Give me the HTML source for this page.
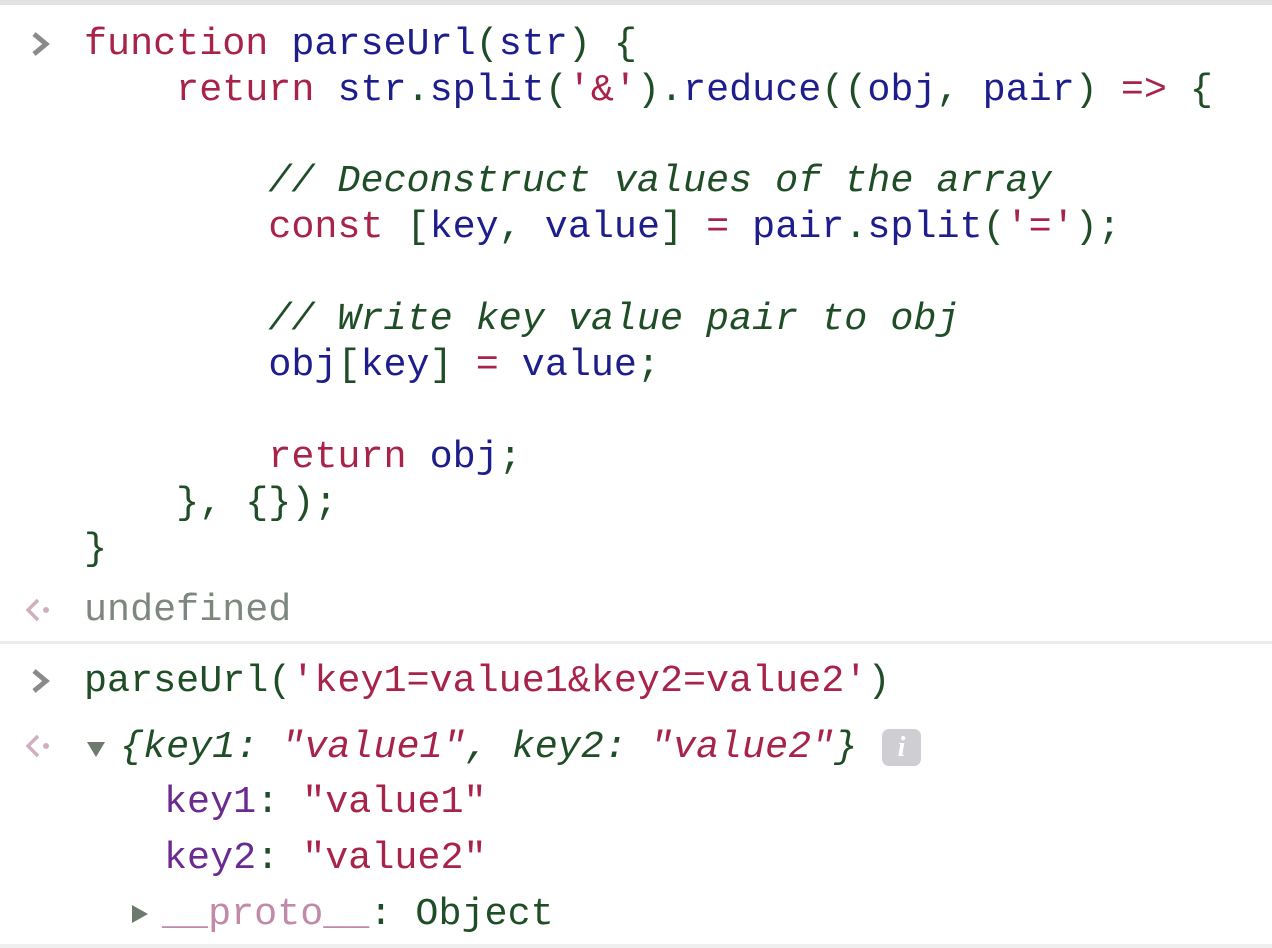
<!DOCTYPE html>
<html><head><meta charset="utf-8"><style>
html,body{margin:0;padding:0;background:#fff;width:1272px;height:948px;overflow:hidden;position:relative}
.l{position:absolute;height:46px;line-height:46px;font-family:"Liberation Mono",monospace;font-size:38.4px;white-space:pre;color:#1e4d26}
.k{color:#a8234a}.v{color:#1d1d8c}.c{color:#1e4d26;font-style:italic}.s{color:#a8234a}.g{color:#7d877e}
.p{color:#6b2a8f}.pr{color:#c08aa8}
.i{font-style:italic}
.hr{position:absolute;left:0;width:1272px;background:#e6e6e6}
</style></head><body>
<div class="hr" style="top:0;height:5px;background:#e2e2e2"></div>
<div class="hr" style="top:641px;height:3px;background:#ececec"></div>
<div class="hr" style="top:944px;height:4px;background:#efefef"></div>

<svg style="position:absolute;left:30px;top:30px" width="22" height="28"><path d="M4 4 L16 14 L4 24" fill="none" stroke="#8a8a8a" stroke-width="5"/></svg>
<div class="l" style="left:84px;top:21px"><span class="k">function</span> <span class="v">parseUrl</span>(<span class="v">str</span>) {</div>
<div class="l" style="left:84px;top:67px">    <span class="k">return</span> <span class="v">str</span>.<span class="v">split</span>(<span class="s">'&amp;'</span>).<span class="v">reduce</span>((<span class="v">obj</span>, <span class="v">pair</span>) <span class="k">=&gt;</span> {</div>
<div class="l" style="left:84px;top:158px">        <span class="c">// Deconstruct values of the array</span></div>
<div class="l" style="left:84px;top:204px">        <span class="k">const</span> [<span class="v">key</span>, <span class="v">value</span>] <span class="k">=</span> <span class="v">pair</span>.<span class="v">split</span>(<span class="s">'='</span>);</div>
<div class="l" style="left:84px;top:296px">        <span class="c">// Write key value pair to obj</span></div>
<div class="l" style="left:84px;top:342px">        <span class="v">obj</span>[<span class="v">key</span>] <span class="k">=</span> <span class="v">value</span>;</div>
<div class="l" style="left:84px;top:434px">        <span class="k">return</span> <span class="v">obj</span>;</div>
<div class="l" style="left:84px;top:480px">    }, {});</div>
<div class="l" style="left:84px;top:526px">}</div>

<svg style="position:absolute;left:24px;top:596px" width="32" height="30"><path d="M14 4 L4 14 L14 24" fill="none" stroke="#d0b0c0" stroke-width="3.5"/><circle cx="22" cy="14" r="3" fill="#d0b0c0"/></svg>
<div class="l g" style="left:84px;top:587px">undefined</div>

<svg style="position:absolute;left:30px;top:667px" width="22" height="28"><path d="M4 4 L16 14 L4 24" fill="none" stroke="#8a8a8a" stroke-width="5"/></svg>
<div class="l" style="left:84px;top:658px">parseUrl(<span class="s">'key1=value1&amp;key2=value2'</span>)</div>

<svg style="position:absolute;left:24px;top:732px" width="32" height="30"><path d="M14 4 L4 14 L14 24" fill="none" stroke="#d0b0c0" stroke-width="3.5"/><circle cx="22" cy="14" r="3" fill="#d0b0c0"/></svg>
<svg style="position:absolute;left:86px;top:740px" width="22" height="20"><path d="M1 2 L19 2 L10 17 Z" fill="#6e7a6e"/></svg>
<div class="l i" style="left:120px;top:724px">{key1: <span class="s">"value1"</span>, key2: <span class="s">"value2"</span>}</div>
<div style="position:absolute;left:882px;top:729px;width:39px;height:37px;border-radius:7px;background:#cfcfd3;color:#fff;font:italic bold 28px 'Liberation Serif',serif;text-align:center;line-height:37px">i</div>

<div class="l" style="left:164px;top:779px"><span class="p">key1</span>: <span class="s">"value1"</span></div>
<div class="l" style="left:164px;top:835px"><span class="p">key2</span>: <span class="s">"value2"</span></div>
<svg style="position:absolute;left:130px;top:904px" width="22" height="22"><path d="M2 1 L18 10 L2 19 Z" fill="#6e7a6e"/></svg>
<div class="l" style="left:162px;top:891px"><span class="pr">__proto__</span>: Object</div>
</body></html>
